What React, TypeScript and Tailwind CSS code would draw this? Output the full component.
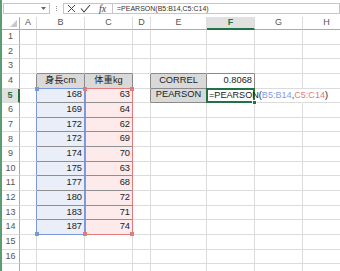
import React from 'react';

const COLS = ['A', 'B', 'C', 'D', 'E', 'F', 'G', 'H'];
const B_VALS = [168, 169, 172, 172, 174, 175, 177, 180, 183, 187];
const C_VALS = [63, 64, 62, 69, 70, 63, 68, 72, 71, 74];

type CellStyle = { bg: string; r: string; b: string; extra: string };

function cellStyle(row: number, col: string): CellStyle {
  let bg = 'bg-white';
  let r = 'border-r-[#dcdcdc]';
  let b = 'border-b-[#dcdcdc]';
  let extra = '';
  if (row === 3) {
    if (col === 'B' || col === 'C' || col === 'E' || col === 'F') b = 'border-b-[#8a8a8a]';
  }
  if (row === 4) {
    if (col === 'A' || col === 'D') r = 'border-r-[#8a8a8a]';
    if (col === 'B') { bg = 'bg-[#d9d9d9]'; r = 'border-r-[#8a8a8a]'; b = 'border-b-[#7a98dc]'; }
    if (col === 'C') { bg = 'bg-[#d9d9d9]'; r = 'border-r-[#8a8a8a]'; b = 'border-b-[#e27b7b]'; }
    if (col === 'E') { bg = 'bg-[#d9d9d9]'; r = 'border-r-[#8a8a8a]'; b = 'border-b-[#8a8a8a]'; }
    if (col === 'F') { r = 'border-r-[#8a8a8a]'; b = 'border-b-[#8a8a8a]'; }
  }
  if (row >= 5 && row <= 14) {
    if (col === 'A') r = 'border-r-[#7a98dc]';
    if (col === 'B') {
      bg = 'bg-[#e9eef9]';
      r = 'border-r-[#7a98dc]';
      b = row < 14 ? 'border-b-[#8f8f8f]' : 'border-b-[#7a98dc]';
    }
    if (col === 'C') {
      bg = 'bg-[#fdeaea]';
      r = 'border-r-[#e27b7b]';
      b = row < 14 ? 'border-b-[#8f8f8f]' : 'border-b-[#e27b7b]';
      extra = 'shadow-[inset_1px_0_0_#e27b7b]';
    }
  }
  if (row === 5) {
    if (col === 'D') r = 'border-r-[#8a8a8a]';
    if (col === 'E') { bg = 'bg-[#d9d9d9]'; r = 'border-r-[#8a8a8a]'; b = 'border-b-[#8a8a8a]'; }
    if (col === 'F' || col === 'G') r = 'border-r-transparent';
  }
  return { bg, r, b, extra };
}

function Handle({ pos, color }: { pos: string; color: string }) {
  return <div className={`absolute w-[4px] h-[4px] z-20 ${pos} ${color}`} />;
}

function CellContent({ row, col }: { row: number; col: string }) {
  if (row === 4 && col === 'B') return <div className="w-full text-center">身長cm</div>;
  if (row === 4 && col === 'C') return <div className="w-full text-center">体重kg</div>;
  if (row === 4 && col === 'E') return <div className="w-full text-center">CORREL</div>;
  if (row === 5 && col === 'E') return <div className="w-full text-center">PEARSON</div>;
  if (row === 4 && col === 'F') return <div className="w-full text-right pr-[2px]">0.8068</div>;
  if (row >= 5 && row <= 14 && col === 'B')
    return <div className="w-full text-right pr-[2px]">{B_VALS[row - 5]}</div>;
  if (row >= 5 && row <= 14 && col === 'C')
    return <div className="w-full text-right pr-[2px]">{C_VALS[row - 5]}</div>;
  if (row === 5 && col === 'F')
    return (
      <div className="absolute left-[2px] top-0 h-full flex items-center whitespace-nowrap z-30 text-[9.1px]">
        <span className="text-[#222]">=PEARSON(</span>
        <span className="text-[#7f9ee0]">B5:B14</span>
        <span className="text-[#222]">,</span>
        <span className="text-[#e27b7b]">C5:C14</span>
        <span className="text-[#222]">)</span>
      </div>
    );
  return null;
}

export default function App() {
  const rows = Array.from({ length: 17 }, (_, i) => i + 1);
  return (
    <div
      className="w-[340px] h-[271px] overflow-hidden bg-white border-l-2 border-[#5a9c74] text-[#222]"
      style={{ fontFamily: '"Liberation Sans", "Noto Sans CJK JP", sans-serif' }}
    >
      {/* formula bar */}
      <div className="h-[17px] flex items-start pt-[3px]">
        <div className="ml-[1px] w-[47px] h-[11px] border border-[#c6c6c6] flex items-center justify-end pr-[3px]">
          <svg width="5" height="3" viewBox="0 0 5 3">
            <path d="M0 0 L5 0 L2.5 3 Z" fill="#666" />
          </svg>
        </div>
        <div className="w-[13px] h-[11px] flex flex-col items-center justify-center gap-[1px]">
          <div className="w-[1px] h-[1px] bg-[#999]" />
          <div className="w-[1px] h-[1px] bg-[#999]" />
          <div className="w-[1px] h-[1px] bg-[#999]" />
        </div>
        <div className="flex-1 h-[11px] border border-[#c6c6c6] flex items-center">
          <div className="w-[49px] h-full flex items-center border-r border-[#c6c6c6]">
            <svg className="ml-[3px]" width="9" height="9" viewBox="0 0 9 9">
              <path d="M1 1 L8 8 M8 1 L1 8" stroke="#444" strokeWidth="1" />
            </svg>
            <svg className="ml-[4px]" width="11" height="9" viewBox="0 0 11 9">
              <path d="M1 4.5 L4 8 L10 1" stroke="#444" strokeWidth="1.1" fill="none" />
            </svg>
            <span
              className="ml-[8px] text-[10px] italic text-[#444] leading-none"
              style={{ fontFamily: '"Liberation Serif", serif' }}
            >
              fx
            </span>
          </div>
          <div className="pl-[4px] text-[7px] leading-none text-[#333] whitespace-nowrap">
            =PEARSON(B5:B14,C5:C14)
          </div>
        </div>
      </div>
      {/* sheet grid */}
      <div
        className="grid grid-cols-[18px_17px_48px_48px_18px_56px_48px_48px_48px] text-[9.3px]"
        style={{ gridTemplateRows: `13px repeat(17, 14.65px)` }}
      >
        {/* corner */}
        <div className="border-r border-b border-[#ababab] flex items-end justify-end pr-[2px] pb-[2px]">
          <svg width="7" height="7" viewBox="0 0 7 7">
            <path d="M7 0 L7 7 L0 7 Z" fill="#c8c8c8" />
          </svg>
        </div>
        {COLS.map((c) =>
          c === 'F' ? (
            <div
              key={c}
              className="bg-[#e1e1e1] border-r border-[#dcdcdc] border-b-2 border-b-[#217346] flex items-center justify-center text-[9px] font-bold text-[#217346]"
            >
              {c}
            </div>
          ) : (
            <div
              key={c}
              className="border-r border-[#dcdcdc] border-b border-b-[#ababab] flex items-center justify-center text-[9px] text-[#555]"
            >
              {c}
            </div>
          )
        )}
        {rows.map((row) => (
          <React.Fragment key={row}>
            {row === 5 ? (
              <div className="bg-[#e1e1e1] border-b border-[#dcdcdc] border-r-2 border-r-[#217346] flex items-center justify-center text-[9px] font-bold text-[#217346]">
                {row}
              </div>
            ) : (
              <div className="border-b border-[#dcdcdc] border-r border-r-[#ababab] flex items-center justify-center text-[9px] text-[#555]">
                {row < 17 ? row : ''}
              </div>
            )}
            {COLS.map((col) => {
              const s = cellStyle(row, col);
              return (
                <div
                  key={col}
                  className={`relative flex items-center border-r border-b ${s.bg} ${s.r} ${s.b} ${s.extra}`}
                >
                  <CellContent row={row} col={col} />
                  {row === 5 && col === 'B' && <Handle pos="-left-[2px] -top-[2px]" color="bg-[#7a98dc]" />}
                  {row === 14 && col === 'B' && <Handle pos="-left-[2px] -bottom-[2px]" color="bg-[#7a98dc]" />}
                  {row === 5 && col === 'C' && <Handle pos="-left-[2px] -top-[2px]" color="bg-[#e27b7b]" />}
                  {row === 5 && col === 'C' && <Handle pos="-right-[2px] -top-[2px]" color="bg-[#e27b7b]" />}
                  {row === 14 && col === 'C' && <Handle pos="-left-[2px] -bottom-[2px]" color="bg-[#e27b7b]" />}
                  {row === 14 && col === 'C' && <Handle pos="-right-[2px] -bottom-[2px]" color="bg-[#e27b7b]" />}
                  {row === 5 && col === 'F' && (
                    <>
                      <div className="absolute -left-[1px] -top-[1px] w-[49px] h-[calc(100%+2px)] border-2 border-[#217346] z-10 pointer-events-none" />
                      <div className="absolute -right-[3px] -bottom-[3px] w-[5px] h-[5px] bg-[#217346] border border-white z-20" />
                    </>
                  )}
                </div>
              );
            })}
          </React.Fragment>
        ))}
      </div>
    </div>
  );
}
